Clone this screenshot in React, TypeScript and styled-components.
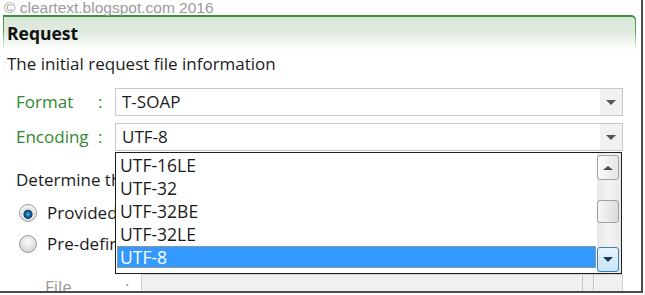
import styled, { createGlobalStyle } from "styled-components";

const GlobalStyle = createGlobalStyle`
  html, body { margin: 0; padding: 0; background: #fff; }
  body {
    font-family: "Open Sans", "Noto Sans", sans-serif;
    color: #1b1b1b;
  }
`

const Frame = styled.div`
  position: relative;
  width: 643px;
  height: 293px;
  box-sizing: border-box;
  border-right: 2px solid #4b4b4b;
  border-bottom: 2px solid #4b4b4b;
  overflow: hidden;
  font-size: 17px;
`

const Watermark = styled.div`
  height: 15px;
  padding-left: 4px;
  font: 15.5px/15px "Liberation Sans", Arial, sans-serif;
  color: #9b9b9b;
  white-space: nowrap;
`

const HeaderFrame = styled.div`
  margin-left: 3px;
  width: 633px;
  box-sizing: border-box;
  padding: 2px 1px 0;
  border-top-right-radius: 5px;
  background: linear-gradient(to bottom, #3a903a 0%, #56a256 45%, rgba(90, 165, 90, 0) 100%);
`

const HeaderInner = styled.div`
  height: 33px;
  padding-left: 3px;
  border-top-right-radius: 4px;
  background: linear-gradient(to bottom, #d9e7d9 0%, #dfebdf 45%, #ffffff 100%);
  font-weight: 700;
  font-size: 17.5px;
  line-height: 33px;
  color: #111;
`

const Description = styled.div`
  padding-left: 7px;
  line-height: 28px;
`

const Form = styled.div`
  display: grid;
  grid-template-columns: 82px 17px 508px;
  grid-auto-rows: 28px;
  row-gap: 7px;
  margin: 10px 0 0 16px;
`

const Label = styled.div<{ $muted?: boolean }>`
  line-height: 28px;
  color: ${(p) => (p.$muted ? "#9a9a9a" : "#338833")};
`

const Combo = styled.div`
  display: flex;
  box-sizing: border-box;
  height: 28px;
  border: 1px solid #c3cad4;
  background: #fff;
`

const ComboText = styled.div`
  flex: 1;
  padding-left: 6px;
  line-height: 26px;
`

const ComboButton = styled.div`
  width: 22px;
  display: flex;
  align-items: center;
  justify-content: center;
  background: #f1f1f2;
`

const Arrow = styled.span<{ $up?: boolean; $color?: string }>`
  width: 0;
  height: 0;
  border-left: 5px solid transparent;
  border-right: 5px solid transparent;
  ${(p) =>
    p.$up
      ? `border-bottom: 4px solid ${p.$color || "#555"};`
      : `border-top: 5px solid ${p.$color || "#555"};`}
`

const Section = styled.div`
  padding-left: 16px;
  margin-top: 15px;
  line-height: 28px;
`

const RadioList = styled.div`
  padding-top: 3px;
`

const RadioRow = styled.div`
  display: flex;
  align-items: center;
  height: 31px;
  padding-left: 19px;
  gap: 10px;
`

const Radio = styled.span<{ $checked?: boolean }>`
  width: 16px;
  height: 16px;
  border-radius: 50%;
  border: 1px solid #9a9a9a;
  background: ${(p) =>
    p.$checked
      ? "radial-gradient(circle at 50% 58%, #5cc3f0 0, #1d74ab 2px, #0c3e66 4.2px, #d6d6d6 4.8px, #f6f6f6 8px)"
      : "radial-gradient(circle at 50% 35%, #fbfbfb 0, #e0e0e0 55%, #c8c8c8 100%)"};
`

const FileRow = styled.div`
  display: grid;
  grid-template-columns: 80px 16px 482px;
  height: 28px;
  margin-top: 14px;
  padding-left: 45px;
`

const FileBox = styled.div`
  display: flex;
  justify-content: flex-end;
  box-sizing: border-box;
  height: 28px;
  margin-top: 1px;
  border: 1px solid #d0d0d0;
  background: #f0f0f0;
`

const FileButton = styled.div`
  width: 28px;
  border-left: 1px solid #c4c4c4;
  box-shadow: inset 1px 0 0 #fafafa;
`

const FileSpacer = styled.div`
  width: 10px;
  border-left: 1px solid #c4c4c4;
`

const Popup = styled.div`
  position: absolute;
  left: 115px;
  top: 152px;
  width: 507px;
  height: 122px;
  box-sizing: border-box;
  border: 1px solid #1e1e1e;
  background: #fff;
  display: flex;
  font-size: 17.5px;
`

const Items = styled.div`
  flex: 1;
`

const Item = styled.div<{ $selected?: boolean }>`
  height: 22px;
  margin: 1px;
  padding-left: 3px;
  box-sizing: border-box;
  line-height: 22px;
  ${(p) =>
    p.$selected &&
    `
    background: #3399ff;
    color: #fff;
    outline: 1px dotted #d99a3c;
    outline-offset: -1px;
  `}
`

const Scrollbar = styled.div`
  width: 24px;
  box-sizing: border-box;
  padding: 2px 2px 1px 0;
  display: flex;
  flex-direction: column;
  background: linear-gradient(to right, #e8e8e8, #f4f4f4 50%, #e8e8e8);
`

const ScrollButton = styled.div<{ $hover?: boolean }>`
  height: 25px;
  box-sizing: border-box;
  border-radius: 3px;
  display: flex;
  align-items: center;
  justify-content: center;
  border: 1px solid ${(p) => (p.$hover ? "#3c7fb1" : "#a3a3a3")};
  background: ${(p) =>
    p.$hover
      ? "linear-gradient(to bottom, #e8f5fd, #c4e4f8)"
      : "linear-gradient(to right, #fafafa, #e6e6e6)"};
`

const Track = styled.div`
  flex: 1;
  padding-top: 20px;
`

const Thumb = styled.div`
  height: 23px;
  box-sizing: border-box;
  border-radius: 3px;
  border: 1px solid #a0a0a0;
  background: linear-gradient(to right, #f6f6f6, #dcdcdc);
`

const encodings = ["UTF-16LE", "UTF-32", "UTF-32BE", "UTF-32LE", "UTF-8"]

export default function App() {
  return (
    <Frame>
      <GlobalStyle />
      <Watermark>© cleartext.blogspot.com 2016</Watermark>
      <HeaderFrame>
        <HeaderInner>Request</HeaderInner>
      </HeaderFrame>
      <Description>The initial request file information</Description>
      <Form>
        <Label>Format</Label>
        <Label>:</Label>
        <Combo>
          <ComboText>T-SOAP</ComboText>
          <ComboButton><Arrow /></ComboButton>
        </Combo>
        <Label>Encoding</Label>
        <Label>:</Label>
        <Combo>
          <ComboText>UTF-8</ComboText>
          <ComboButton><Arrow /></ComboButton>
        </Combo>
      </Form>
      <Section>Determine the request file</Section>
      <RadioList>
        <RadioRow>
          <Radio $checked />
          <span>Provided file</span>
        </RadioRow>
        <RadioRow>
          <Radio />
          <span>Pre-defined file</span>
        </RadioRow>
      </RadioList>
      <FileRow>
        <Label $muted>File</Label>
        <Label $muted>:</Label>
        <FileBox>
          <FileSpacer />
          <FileButton />
        </FileBox>
      </FileRow>
      <Popup>
        <Items>
          {encodings.map((e) => (
            <Item key={e} $selected={e === "UTF-8"}>{e}</Item>
          ))}
        </Items>
        <Scrollbar>
          <ScrollButton><Arrow $up $color="#4a4a4a" /></ScrollButton>
          <Track><Thumb /></Track>
          <ScrollButton $hover><Arrow $color="#1d3b57" /></ScrollButton>
        </Scrollbar>
      </Popup>
    </Frame>
  )
}
